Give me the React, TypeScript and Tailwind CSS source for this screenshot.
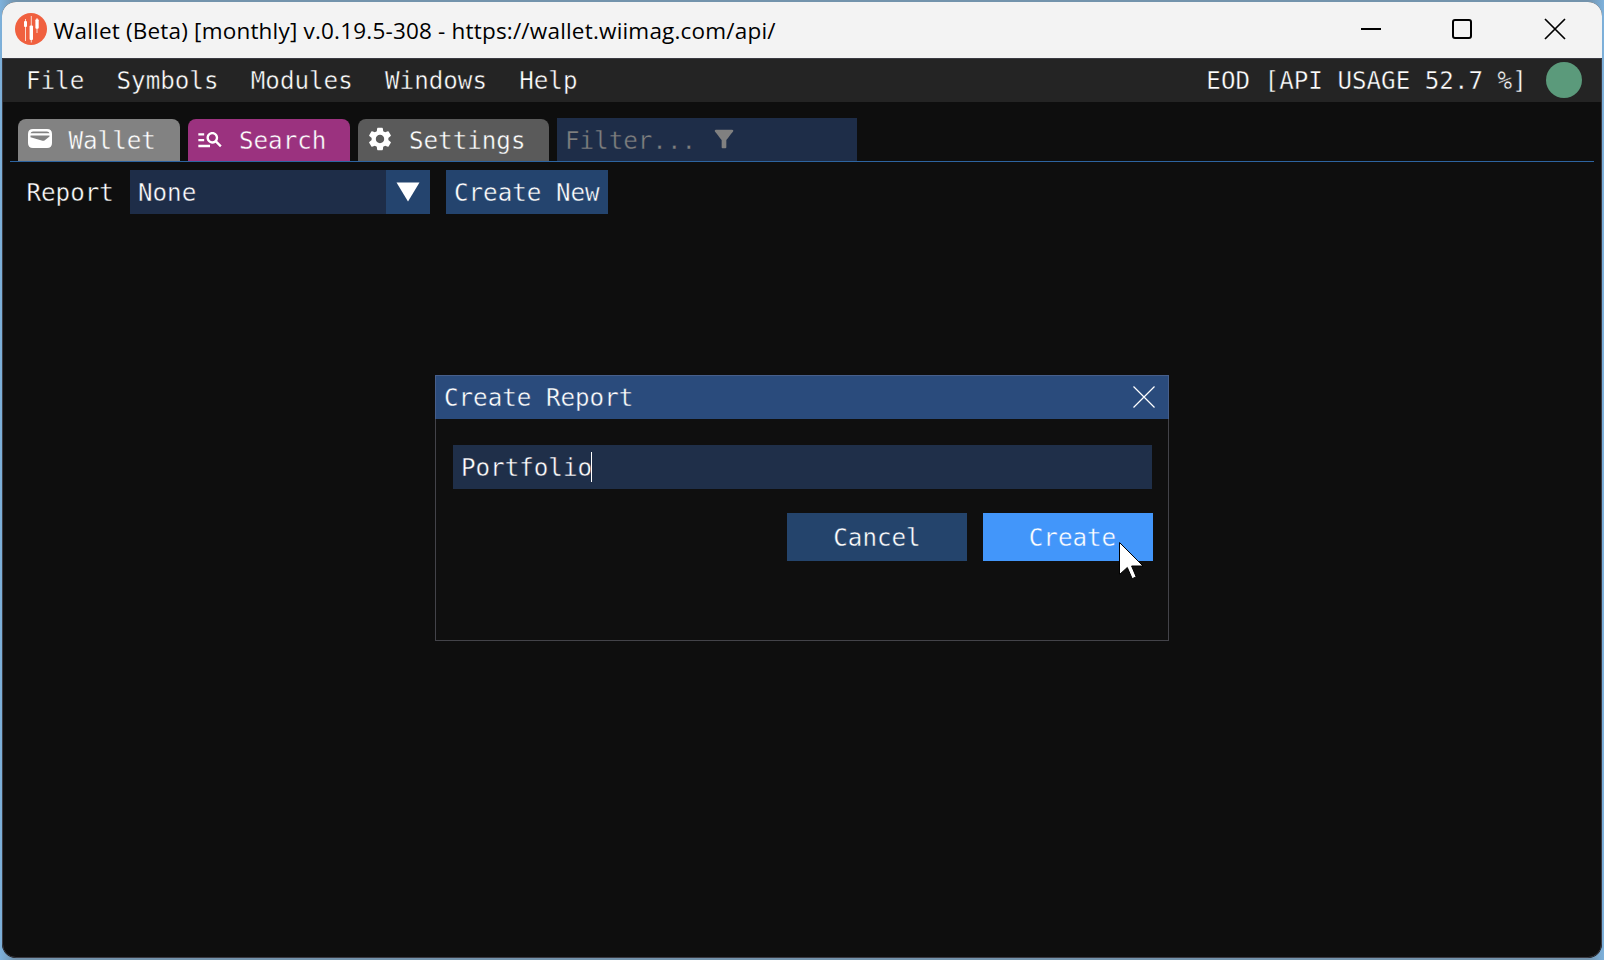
import React from "react";
import { MdManageSearch, MdSettings, MdFilterAlt } from "react-icons/md";

function Mono({ children, className = "" }: { children: React.ReactNode; className?: string }) {
  return <span className={"whitespace-pre [-webkit-text-stroke-width:0.4px] " + className}>{children}</span>;
}

function Logo() {
  return (
    <svg className="mb-0.5 h-8 w-8 shrink-0" viewBox="0 0 32 32">
      <circle cx="16" cy="16" r="16" fill="#f0603f" />
      <g stroke="#fbd9cf" strokeWidth="1">
        <path d="M10.500 6v22M16.300 3v26.500M22 5v15" />
      </g>
      <g fill="#fff">
        <rect x="9" y="8" width="3" height="6" rx="1" />
        <rect x="14.600" y="12.500" width="3.400" height="14.500" rx="1" />
        <rect x="20.400" y="6.300" width="3.300" height="9.500" rx="1" />
      </g>
    </svg>
  );
}

function WalletIcon() {
  return (
    <svg className="mb-[3px] h-[19px] w-6 shrink-0" viewBox="0 0 24 19">
      <path
        fillRule="evenodd"
        fill="#fff"
        d="M5 0H19Q24 0 24 5V14Q24 19 19 19H5Q0 19 0 14V5Q0 0 5 0ZM2.500 4.200H21.500Q21 2.500 19 2.500H5Q3 2.500 2.500 4.200ZM2.500 6.500V8.300L14.500 11.700Q15.600 12 16.500 11.400L21.500 7.500V6.500Z"
      />
    </svg>
  );
}

export default function App() {
  return (
    <div className="h-[960px] w-[1604px] overflow-hidden bg-[linear-gradient(90deg,#7db1dc,#7393ac_1%,#7393ac_99%,#7db1dc)] p-0.5 font-['DejaVu_Sans_Mono',monospace] text-[24.2px] leading-[44px] text-white">
      <div className="flex h-[956px] w-[1600px] flex-col overflow-hidden rounded-[14px] bg-[#0e0e0e]">
        <header className="flex h-14 shrink-0 items-center bg-[#f3f3f3] pl-[13px] text-black">
          <Logo />
          <span className="ml-[6.500px] whitespace-pre pt-0.5 font-['Open_Sans',sans-serif] text-[22.5px] tracking-[0.19px]">
            Wallet (Beta) [monthly] v.0.19.5-308 - https://wallet.wiimag.com/api/
          </span>
          <svg className="ml-auto h-14 w-[260px]" viewBox="0 0 260 56" fill="none" stroke="#000" strokeWidth="2">
            <path d="M19 27H39" />
            <rect x="111" y="18" width="18" height="18" rx="2" />
            <path d="M203 17L223 37M223 17L203 37" strokeWidth="1.700" />
          </svg>
        </header>

        <div className="flex min-h-0 flex-1 flex-col rounded-b-[14px] border border-[#3a3a42]">
          <nav className="flex h-[43px] shrink-0 items-center gap-[32.3px] bg-[#242424] pl-[23px] pr-[19px] [-webkit-text-stroke-color:#242424]">
            <Mono>File</Mono>
            <Mono>Symbols</Mono>
            <Mono>Modules</Mono>
            <Mono>Windows</Mono>
            <Mono>Help</Mono>
            <Mono className="ml-auto">EOD [API USAGE 52.7 %]</Mono>
            <span className="-ml-[13px] mb-px h-9 w-9 rounded-full bg-[#5b9a7b]" />
          </nav>

          <div className="mx-[7px] mt-4 flex h-11 shrink-0 items-end gap-2 border-b border-[#2d64a0] pl-2">
            <div className="flex h-[42px] w-[162px] items-center rounded-t-lg bg-[#828282] pl-2.5 [-webkit-text-stroke-color:#828282]">
              <WalletIcon />
              <Mono className="ml-[16.500px] pt-0.5">Wallet</Mono>
            </div>
            <div className="flex h-[42px] w-[162px] items-center rounded-t-lg bg-[#9b327f] pl-2 [-webkit-text-stroke-color:#9b327f]">
              <MdManageSearch className="mb-0.5 h-7 w-7" />
              <Mono className="ml-[15px] pt-0.5">Search</Mono>
            </div>
            <div className="flex h-[42px] w-[191px] items-center rounded-t-lg bg-[#5a5a5a] pl-2 [-webkit-text-stroke-color:#5a5a5a]">
              <MdSettings className="mb-0.5 h-7 w-7" />
              <Mono className="ml-[15px] pt-0.5">Settings</Mono>
            </div>
            <div className="flex h-[43px] w-[300px] items-center bg-[#1e2d48] pl-2 text-[#808080] [-webkit-text-stroke-color:#1e2d48]">
              <Mono className="pt-0.5">Filter...</Mono>
              <MdFilterAlt className="mb-0.5 ml-[14px] h-7 w-7" />
            </div>
          </div>

          <div className="mt-2 flex h-11 shrink-0 pl-[23.500px] leading-[46px]">
            <Mono className="w-[103.500px] [-webkit-text-stroke-color:#0e0e0e]">Report</Mono>
            <div className="flex w-[300px] justify-between bg-[#1e2d48] pl-2 [-webkit-text-stroke-color:#1e2d48]">
              <Mono>None</Mono>
              <div className="flex w-11 items-center justify-center bg-[#24446e]">
                <svg className="h-5 w-6" viewBox="0 0 24 20">
                  <path d="M0.500 0.500H23.500L12 19.500Z" fill="#fff" />
                </svg>
              </div>
            </div>
            <Mono className="ml-4 h-11 w-[162px] bg-[#24446e] pl-2 [-webkit-text-stroke-color:#24446e]">Create New</Mono>
          </div>

          <section className="ml-[432px] mt-[161px] flex h-[266px] w-[734px] shrink-0 flex-col border border-[#434349] bg-[#0f0f0f]">
            <div className="-mx-px -mt-px flex h-11 shrink-0 items-center justify-between border-x border-t border-[#475f8b] bg-[#2a4b7c] pl-2 pr-[13px] [-webkit-text-stroke-color:#2a4b7c]">
              <Mono>Create Report</Mono>
              <svg className="mb-px h-[22px] w-[22px]" viewBox="0 0 22 22" stroke="#fff" strokeWidth="1.200">
                <path d="M0.500 0.500L21.500 21.500M21.500 0.500L0.500 21.500" />
              </svg>
            </div>
            <div className="ml-[17px] mt-[26px] flex h-11 w-[699px] shrink-0 items-center bg-[#1f2f49] pl-2 [-webkit-text-stroke-color:#1f2f49]">
              <Mono className="pt-0.5">Portfolio</Mono>
              <span className="-ml-px h-[30px] w-px bg-white" />
            </div>
            <div className="relative mr-[15px] mt-6 flex h-12 shrink-0 items-center justify-end gap-4 leading-[50px]">
              <Mono className="h-12 w-[180px] bg-[#24446c] text-center [-webkit-text-stroke-color:#24446c]">Cancel</Mono>
              <Mono className="h-12 w-[170px] bg-[#4296fa] pl-[9px] text-center [-webkit-text-stroke-color:#4296fa]">Create</Mono>
              <svg className="absolute right-[8px] top-[28px] h-10 w-[26px]" viewBox="0 0 26 40">
                <path
                  d="M0.500 1.500V33.500L8.300 26.500L13.200 37.700L17.200 35.900L12.600 25H24Z"
                  fill="#fff"
                  stroke="#000"
                  strokeWidth="1"
                />
              </svg>
            </div>
          </section>
        </div>
      </div>
    </div>
  );
}
